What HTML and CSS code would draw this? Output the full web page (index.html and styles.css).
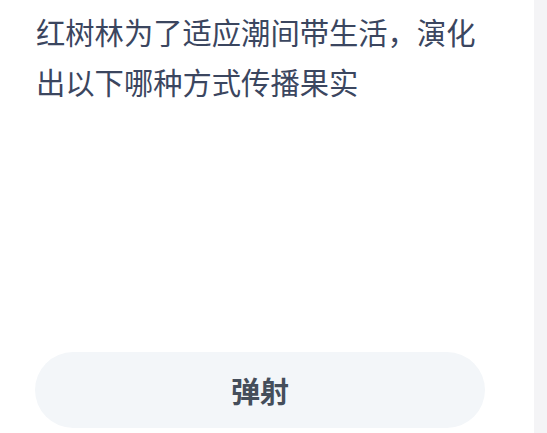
FILE: index.html
```html
<!DOCTYPE html>
<html lang="zh-CN">
<head>
<meta charset="utf-8">
<title>题目</title>
<link rel="stylesheet" href="styles.css">
</head>
<body>
<div class="page">
  <main class="card">
    <h1 class="question">红树林为了适应潮间带生活，演化出以下哪种方式传播果实</h1>
    <div class="spacer"></div>
    <button class="option" type="button">弹射</button>
  </main>
  <aside class="side"></aside>
</div>
</body>
</html>
```

FILE: styles.css
```css
html, body {
  margin: 0;
  padding: 0;
  background: #ffffff;
}
.page {
  display: flex;
  width: 547px;
  height: 433px;
  overflow: hidden;
}
.card {
  flex: 1;
  display: flex;
  flex-direction: column;
  padding: 6px 49px 5px 35px;
  background: #ffffff;
}
.question {
  margin: 0 0 0 1px;
  font-family: "Noto Sans CJK SC", "Noto Sans", sans-serif;
  font-weight: 400;
  font-size: 29.3px;
  line-height: 50px;
  color: #3b465f;
}
.spacer {
  flex: 1;
}
.option {
  display: block;
  width: 450px;
  height: 76px;
  border: none;
  border-radius: 38px;
  background: #f3f6f9;
  font-family: "Noto Sans CJK SC", "Noto Sans", sans-serif;
  font-weight: 700;
  font-size: 29px;
  color: #454e5b;
  padding: 0;
}
.side {
  width: 13px;
  background: #f4f4f6;
}
```
